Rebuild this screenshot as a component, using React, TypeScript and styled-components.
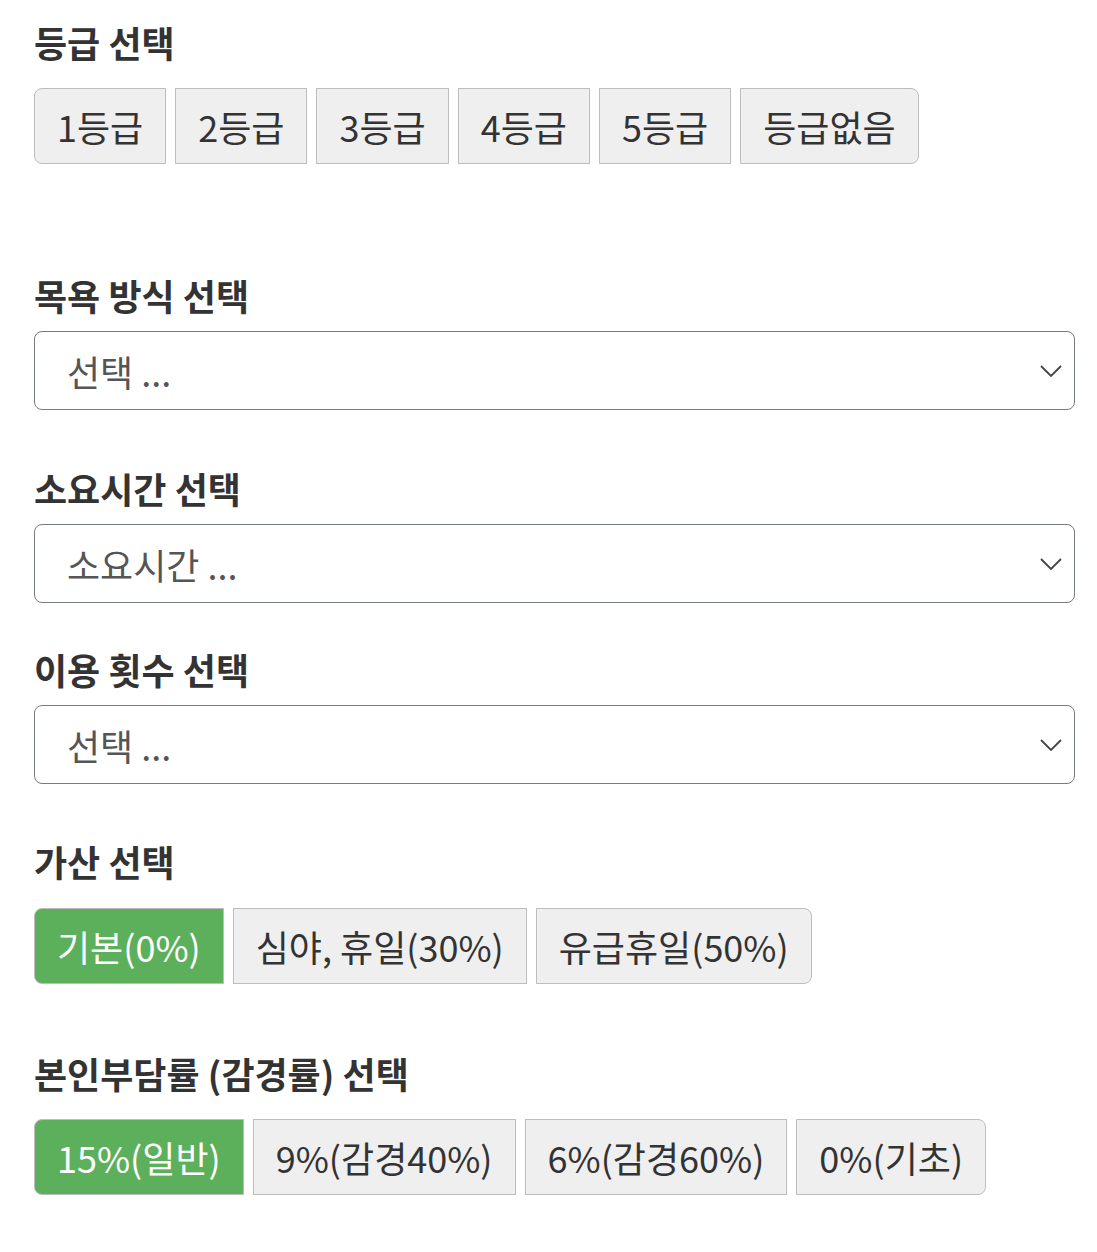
import React, { useState } from 'react';
import styled, { createGlobalStyle } from 'styled-components';

const GlobalStyle = createGlobalStyle`
  html, body {
    margin: 0;
    padding: 0;
    background: #fff;
  }
  body {
    font-family: 'Noto Sans CJK KR', 'Noto Sans', sans-serif;
    color: #333;
  }
`;

const Page = styled.div`
  padding: 18px 22px 40px 34px;
`;

const Section = styled.section<{ $top: number }>`
  margin-top: ${(p) => p.$top}px;
`;

const Label = styled.h3`
  margin: 0;
  font-size: 36px;
  font-weight: 700;
  line-height: 48px;
  color: #333;
`;

const Group = styled.div<{ $top: number }>`
  display: flex;
  gap: 9px;
  margin-top: ${(p) => p.$top}px;
`;

const Choice = styled.button<{ $active: boolean }>`
  height: 76px;
  padding: 0 22px;
  font-family: inherit;
  font-size: 36px;
  line-height: 1;
  border: 1px solid #bdbdbd;
  border-radius: 0;
  background: ${(p) => (p.$active ? '#5cb05c' : '#efefef')};
  color: ${(p) => (p.$active ? '#fff' : '#333')};
  cursor: pointer;

  &:first-child {
    border-top-left-radius: 8px;
    border-bottom-left-radius: 8px;
  }

  &:last-child {
    border-top-right-radius: 8px;
    border-bottom-right-radius: 8px;
  }
`;

const SelectBox = styled.div`
  margin-top: 12px;
  height: 79px;
  box-sizing: border-box;
  border: 1.5px solid #777c82;
  border-radius: 8px;
  display: flex;
  align-items: center;
  padding: 0 32px;
  font-size: 36px;
  color: #555;
`;

const Chevron = styled.svg`
  margin-left: auto;
  margin-right: -20px;
  width: 22px;
  height: 12px;
`;

type ChoiceGroupProps = {
  items: string[];
  initial: number;
  top: number;
};

const ChoiceGroup = ({ items, initial, top }: ChoiceGroupProps) => {
  const [active, setActive] = useState(initial);
  return (
    <Group $top={top}>
      {items.map((item, i) => (
        <Choice key={item} $active={i === active} onClick={() => setActive(i)}>
          {item}
        </Choice>
      ))}
    </Group>
  );
};

const Select = ({ placeholder }: { placeholder: string }) => (
  <SelectBox>
    {placeholder}
    <Chevron viewBox="0 0 22 12" fill="none">
      <path d="M1 1l10 10L21 1" stroke="#444" strokeWidth="1.8" />
    </Chevron>
  </SelectBox>
);

const App = () => (
  <Page>
    <GlobalStyle />
    <Section $top={0}>
      <Label>등급 선택</Label>
      <ChoiceGroup
        items={['1등급', '2등급', '3등급', '4등급', '5등급', '등급없음']}
        initial={-1}
        top={22}
      />
    </Section>
    <Section $top={107}>
      <Label>목욕 방식 선택</Label>
      <Select placeholder="선택 ..." />
    </Section>
    <Section $top={54}>
      <Label>소요시간 선택</Label>
      <Select placeholder="소요시간 ..." />
    </Section>
    <Section $top={42}>
      <Label>이용 횟수 선택</Label>
      <Select placeholder="선택 ..." />
    </Section>
    <Section $top={53}>
      <Label>가산 선택</Label>
      <ChoiceGroup
        items={['기본(0%)', '심야, 휴일(30%)', '유급휴일(50%)']}
        initial={0}
        top={23}
      />
    </Section>
    <Section $top={65}>
      <Label>본인부담률 (감경률) 선택</Label>
      <ChoiceGroup
        items={['15%(일반)', '9%(감경40%)', '6%(감경60%)', '0%(기초)']}
        initial={0}
        top={22}
      />
    </Section>
  </Page>
);

export default App;
